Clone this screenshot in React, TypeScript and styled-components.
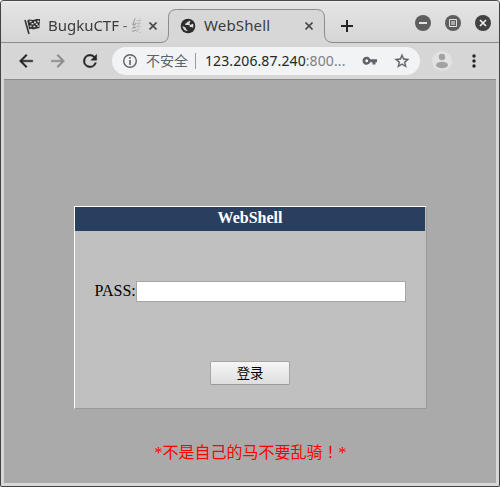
import React from "react";
import styled, { createGlobalStyle } from "styled-components";

const Global = createGlobalStyle`
  * { box-sizing: border-box; }
  body { margin: 0; background: #fff; overflow: hidden; }
`;
const Window = styled.div`
  width: 500px; height: 487px; display: flex; flex-direction: column;
  border: 1px solid #424242; border-top-color: #4a484a; border-radius: 4px 4px 2px 2px;
  background: #d8d8d8; overflow: hidden;
  font-family: "Noto Sans", "Noto Sans CJK SC", sans-serif; color: #303234;
`;
const TabStrip = styled.div`
  height: 42px; flex: none; display: flex; align-items: flex-end;
  background: linear-gradient(#f2f2f2 0, #e4e4e4 2px, #d5d5d5 100%);
  box-shadow: inset 0 -1px #8c8c8c; margin: 0 -1px; padding: 0 1px;
`;
const Tab = styled.div<{ $active?: boolean }>`
  position: relative; flex: none; display: flex; align-items: center;
  height: 34px; width: ${p => (p.$active ? 157 : 167)}px;
  padding-left: ${p => (p.$active ? 12 : 22)}px;
  > * { position: relative; }
`;
const TabOutline = styled.svg`
  && { position: absolute; left: -8px; top: 0; width: 173px; height: 34px; }
`;
const TabTitle = styled.span<{ $fade?: boolean }>`
  margin-left: 8px; width: 93px; height: 22px; white-space: nowrap;
  font-size: 15px; line-height: 20px; color: #3a3c3c; letter-spacing: ${p => (p.$fade ? "-0.03px" : "0.15px")};
  ${p => p.$fade && "mask-image: linear-gradient(90deg, #000 70px, transparent 96px); overflow: hidden;"}
`;
const CloseGlyph = styled.svg`
  flex: none; width: 8px; height: 8px; margin-left: 8px; stroke: #4b4b4b; stroke-width: 1.7; fill: none;
`;
const NewTab = styled.svg`
  width: 12px; height: 12px; margin: 0 0 11px 16px; stroke: #242424; stroke-width: 2; flex: none;
`;
const Controls = styled.div`
  display: flex; gap: 14px; margin: 0 8px 12px auto;
  svg { width: 16px; height: 16px; display: block; }
`;
const Toolbar = styled.div`
  height: 37px; flex: none; display: flex; align-items: center;
  background: #d6d6d6; border-bottom: 1px solid #8b8b8b; margin: 0 3px; padding: 0 0 0 12px;
`;
const NavIcon = styled.svg<{ $dim?: boolean }>`
  width: 20px; height: 20px; margin-right: 12px; flex: none; stroke-width: .5;
  fill: ${p => (p.$dim ? "#8b8b8b" : "#252525")}; stroke: ${p => (p.$dim ? "#8b8b8b" : "#252525")};
`;
const Address = styled.div`
  width: 308px; height: 28px; flex: none; border-radius: 14px; background: #f1f3f4;
  display: flex; align-items: center; padding-left: 10px; color: #5f6368;
`;
const SmallIcon = styled.svg<{ $gap?: number }>`
  width: 16px; height: 16px; flex: none; fill: #5f6368; margin-left: ${p => p.$gap || 0}px;
`;
const Insecure = styled.span`
  margin-left: 8px; width: 43px; height: 20px; font: 14px/18px "Noto Sans CJK SC", sans-serif; white-space: nowrap;
`;
const Divider = styled.i`
  width: 1px; height: 16px; margin-left: 6px; background: #9a9da0; flex: none;
`;
const Url = styled.span`
  margin-left: 9px; width: 142px; font-size: 14px; line-height: 20px; letter-spacing: 0.1px;
  white-space: nowrap; color: #7c8084;
  b { font-weight: 400; color: #242628; }
`;
const Avatar = styled.svg`width: 20px; height: 20px; margin-left: 12px; flex: none;`;
const Menu = styled.svg`width: 4px; height: 14px; margin-left: 20px; fill: #242424; flex: none;`;
const Page = styled.main`
  flex: none; width: 492px; height: 403px; margin-left: 3px; padding: 126px 0 0 70px;
  background: #aaa; font-family: "Liberation Serif", "Noto Sans CJK SC", serif; color: #000; font-size: 16px;
`;
const Card = styled.form`
  width: 353px; height: 203px; border: 1px solid #fff; border-right-color: #999; border-bottom-color: #999;
  background: #c0c0c0; display: flex; flex-direction: column;
`;
const CardTitle = styled.h1`
  margin: 0; width: 350px; height: 24px; background: #293f5f; color: #fff; text-align: center;
  font-size: 16px; line-height: 22px; font-weight: 700;
`;
const Field = styled.label`
  display: flex; align-items: flex-start; height: 21px; margin: 50px 0 0 19.5px; line-height: 19px;
`;
const FieldName = styled.span`width: 41.5px; flex: none; white-space: nowrap;`;
const PassInput = styled.input`
  width: 270px; height: 21px; border: 1px solid #a6a6a6; background: #fff; padding: 1px; outline: 0; border-radius: 0;
`;
const Submit = styled.button`
  width: 80px; height: 24px; margin: 59px 0 0 135px; padding: 0; border: 1px solid #a6a6a6;
  border-bottom-color: #999; border-radius: 2px; background: linear-gradient(#f6f6f6, #dedede);
  font: 13.333px/20px "Noto Sans CJK SC", sans-serif; color: #000;
`;
const Warning = styled.p`
  width: 353px; margin: 30px 0 0; text-align: center; color: #f00; line-height: 24px; white-space: nowrap;
`;
const CenteredMark = styled.span`font-family: "Noto Sans CJK TC", sans-serif;`;

const Close = () => <CloseGlyph viewBox="0 0 8 8"><path d="M.5.5l7 7m0-7l-7 7" /></CloseGlyph>;

const Flag = () => (
  <svg width="17" height="17" viewBox="0 0 17 17">
    <path d="M2 2l4 14" stroke="#343434" strokeWidth="1.6" />
    <path d="M4.300 2.600C7 0 9 3 11 1.800S14.500 1 17 1L16.300 10.200c-2.500-.4-3.800 1-5.800 1s-2.700-1.300-4.300.2z" fill="#303030" />
    <path d="M6.500 2.700h2v1.600h-2zm4.500.8h2v1.700h-2zm3.400-1h1.600v1.700h-1.600zM8.500 5h2v1.600h-2zm4.400.4h1.700V7h-1.700zM6.800 7.400h1.700V9H6.800zm3.500.3h2v1.600h-2zm4-.4h1.500v1.500h-1.500z" fill="#ddd" />
  </svg>
);
const Globe = () => (
  <svg width="16" height="16" viewBox="0 0 16 16">
    <circle cx="8" cy="8" r="7.3" fill="#2d2d2d" />
    <path d="M8.900 2.500c-.1 1.200-.8 1.500-2 1.600-.2 1-.6 1.500-1.600 1.500v1.300h3.300c.8 0 1.200.5 1.200 1.200v.8h1.500c.7 0 1.100.4 1.300 1 .8-1 1-2.800.4-4.100-.7 0-1.300.3-1.600.8-1.300.2-1.900-.2-1.900-1.200 0-.8.5-1.300 1.200-1.700zM2.500 8c.2 2.500 2 4.800 4.700 5.300v-1.500c-.9 0-1.400-.5-1.400-1.400v-.7z" fill="#dedede" />
  </svg>
);

export default function App() {
  return (
    <>
      <Global />
      <Window>
        <TabStrip>
          <Tab><Flag /><TabTitle $fade>BugkuCTF - 练</TabTitle><Close /></Tab>
          <Tab $active>
            <TabOutline viewBox="0 0 173 34">
              <path d="M0 34V33.500Q8.500 33.500 8.500 25V8.500Q8.500 .5 16.500 .5H156.500Q164.500 .5 164.500 8.500V25Q164.500 33.500 173 33.500V34z" fill="#d7d7d7" />
              <path d="M0 33.500Q8.500 33.500 8.500 25V8.500Q8.500 .5 16.500 .5H156.500Q164.500 .5 164.500 8.500V25Q164.500 33.500 173 33.500" fill="none" stroke="#8c8c8c" />
            </TabOutline>
            <Globe /><TabTitle>WebShell</TabTitle><Close />
          </Tab>
          <NewTab viewBox="0 0 12 12"><path d="M6 0v12M0 6h12" /></NewTab>
          <Controls>
            <svg viewBox="0 0 16 16"><circle cx="8" cy="8" r="8" fill="#5e5e5e" /><path d="M4 8h8" stroke="#e5e5e5" strokeWidth="2" /></svg>
            <svg viewBox="0 0 16 16"><circle cx="8" cy="8" r="8" fill="#5e5e5e" /><path d="M4.500 4.500h7v7h-7z" fill="none" stroke="#e0e0e0" /><path d="M6 6h4v4H6z" fill="#aaa" /></svg>
            <svg viewBox="0 0 16 16"><circle cx="8" cy="8" r="8" fill="#424242" /><path d="M5 5l6 6m0-6l-6 6" stroke="#eee" strokeWidth="1.7" /></svg>
          </Controls>
        </TabStrip>
        <Toolbar>
          <NavIcon viewBox="0 0 24 24"><path d="M20 11H7.800l5.600-5.600L12 4l-8 8 8 8 1.400-1.400L7.800 13H20z" /></NavIcon>
          <NavIcon $dim viewBox="0 0 24 24"><path d="M4 11h12.200l-5.600-5.600L12 4l8 8-8 8-1.400-1.400 5.600-5.600H4z" /></NavIcon>
          <NavIcon viewBox="0 0 24 24"><path d="M17.65 6.35A7.96 7.96 0 0 0 12 4a8 8 0 1 0 7.73 10h-2.08A6 6 0 1 1 12 6c1.66 0 3.14.69 4.22 1.78L13 11h7V4z" /></NavIcon>
          <Address>
            <SmallIcon viewBox="0 0 16 16"><path fillRule="evenodd" d="M8 1a7 7 0 1 0 0 14A7 7 0 0 0 8 1zm0 1.400a5.600 5.600 0 1 1 0 11.200A5.600 5.600 0 0 1 8 2.400zM7.200 4h1.600v1.700H7.200zm0 3h1.600v5H7.200z" /></SmallIcon>
            <Insecure>不安全</Insecure><Divider />
            <Url><b>123.206.87.240</b>:800...</Url>
            <SmallIcon $gap={15} viewBox="0 0 16 16"><path fillRule="evenodd" d="M8.200 6.200a4 4 0 1 0 0 3h2.300v2.300h3V9.200H15v-3zM4.700 6.200a1.500 1.500 0 1 1 0 3 1.500 1.500 0 0 1 0-3z" /></SmallIcon>
            <SmallIcon $gap={16} viewBox="1 1 22 22"><path stroke="#5f6368" strokeWidth=".4" d="M22 9.240l-7.190-.62L12 2 9.190 8.630 2 9.240l5.460 4.730L5.820 21 12 17.270 18.180 21l-1.630-7.030zM12 15.400l-3.760 2.270 1-4.280-3.320-2.880 4.380-.38L12 6.100l1.710 4.040 4.380.38-3.320 2.880 1 4.280z" /></SmallIcon>
          </Address>
          <Avatar viewBox="0 0 20 20"><circle cx="10" cy="10" r="10" fill="#e2e2e2" /><circle cx="10" cy="6" r="3.200" fill="#a2a2a2" /><ellipse cx="10" cy="14" rx="6" ry="3.200" fill="#a2a2a2" /></Avatar>
          <Menu viewBox="0 0 4 14"><circle cx="2" cy="2" r="1.700" /><circle cx="2" cy="7" r="1.700" /><circle cx="2" cy="12" r="1.700" /></Menu>
        </Toolbar>
        <Page>
          <Card onSubmit={e => e.preventDefault()}>
            <CardTitle>WebShell</CardTitle>
            <Field><FieldName>PASS:</FieldName><PassInput type="password" /></Field>
            <Submit type="submit">登录</Submit>
          </Card>
          <Warning>*不是自己的马不要乱骑<CenteredMark>！</CenteredMark>*</Warning>
        </Page>
      </Window>
    </>
  );
}
